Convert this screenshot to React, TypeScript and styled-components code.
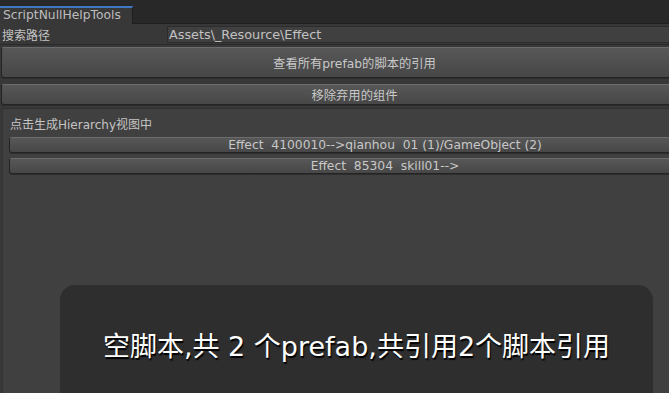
import React from "react";
import styled, { createGlobalStyle } from "styled-components";

const GlobalStyle = createGlobalStyle`
  html, body {
    margin: 0;
    padding: 0;
    background: #282828;
    overflow: hidden;
  }
`;

const Window = styled.div`
  position: relative;
  width: 669px;
  height: 393px;
  display: flex;
  flex-direction: column;
  overflow: hidden;
  font-family: "DejaVu Sans", "Noto Sans CJK SC", sans-serif;
  font-size: 12px;
  color: #c4c4c4;
`;

const TabBar = styled.div`
  height: 24px;
  flex: none;
  display: flex;
  align-items: flex-end;
  background: #282828;
  border-bottom: 1px solid #1e1e1e;
  box-sizing: border-box;
`;

const Tab = styled.div`
  width: 133px;
  height: 18px;
  margin-bottom: -1px;
  box-sizing: border-box;
  border-top: 2px solid #3e78c4;
  border-right: 1px solid #1e1e1e;
  background: #383838;
  color: #bdbdbd;
  font-size: 12.3px;
  padding-left: 3px;
  line-height: 15px;
`;

const Body = styled.div`
  flex: 1;
  display: flex;
  flex-direction: column;
  background: #383838;
`;

const PathRow = styled.div`
  height: 20px;
  display: flex;
  align-items: center;
  padding-left: 2px;
  border-bottom: 1px solid #2a2a2a;
`;

const Label = styled.div`
  width: 165px;
  flex: none;
`;

const Field = styled.div`
  flex: 1;
  height: 17px;
  box-sizing: border-box;
  background: #404040;
  border: 1px solid #2c2c2c;
  border-right: none;
  padding-left: 1px;
  line-height: 15px;
  font-size: 12.8px;
  color: #c2c2c2;
`;

const Button = styled.div<{ $h: number; $left: number; $w: number }>`
  height: ${(p) => p.$h}px;
  width: ${(p) => p.$w}px;
  flex: none;
  margin-left: ${(p) => p.$left}px;
  box-sizing: border-box;
  display: flex;
  align-items: center;
  justify-content: center;
  border-radius: 3px;
  border: 1px solid #242424;
  border-top-color: #6c6c6c;
  background: linear-gradient(#575757, #474747);
  box-shadow: 0 1px 0 #2e2e2e;
  color: #c8c8c8;
  font-size: 12.3px;
  white-space: pre;
`;

const ButtonStack = styled.div`
  display: flex;
  flex-direction: column;
  gap: 6px;
  padding-top: 2px;
  padding-bottom: 2px;
`;

const Box = styled.div`
  flex: 1;
  margin-left: 2px;
  margin-top: 1px;
  background: #404040;
  border-top: 1px solid #2f2f2f;
  border-left: 1px solid #333333;
  padding-top: 8px;
  display: flex;
  flex-direction: column;
`;

const Hint = styled.div`
  padding-left: 7px;
  height: 16px;
  line-height: 16px;
  margin-bottom: 4px;
`;

const EntryList = styled.div`
  display: flex;
  flex-direction: column;
  gap: 5px;
`;

const Toast = styled.div`
  position: absolute;
  left: 60px;
  top: 285px;
  width: 593px;
  height: 130px;
  border-radius: 15px;
  background: #2e2e2e;
  display: flex;
  justify-content: center;
  padding-top: 40px;
  box-sizing: border-box;
  color: #ffffff;
  font-family: "DejaVu Sans", "Noto Sans CJK SC", sans-serif;
  font-size: 27px;
  text-shadow: 1px 2px 1px #000000;
  white-space: pre;
`;

export default function App() {
  return (
    <Window>
      <GlobalStyle />
      <TabBar>
        <Tab>ScriptNullHelpTools</Tab>
      </TabBar>
      <Body>
        <PathRow>
          <Label>搜索路径</Label>
          <Field>Assets\_Resource\Effect</Field>
        </PathRow>
        <ButtonStack>
          <Button $h={31} $left={1} $w={707}>
            查看所有prefab的脚本的引用
          </Button>
          <Button $h={21} $left={1} $w={707}>
            移除弃用的组件
          </Button>
        </ButtonStack>
        <Box>
          <Hint>点击生成Hierarchy视图中</Hint>
          <EntryList>
            <Button $h={16} $left={6} $w={752}>
              {"Effect  4100010-->qianhou  01 (1)/GameObject (2)"}
            </Button>
            <Button $h={16} $left={6} $w={752}>
              {"Effect  85304  skill01-->"}
            </Button>
          </EntryList>
        </Box>
      </Body>
      <Toast>{"空脚本,共 2 个prefab,共引用2个脚本引用"}</Toast>
    </Window>
  );
}
